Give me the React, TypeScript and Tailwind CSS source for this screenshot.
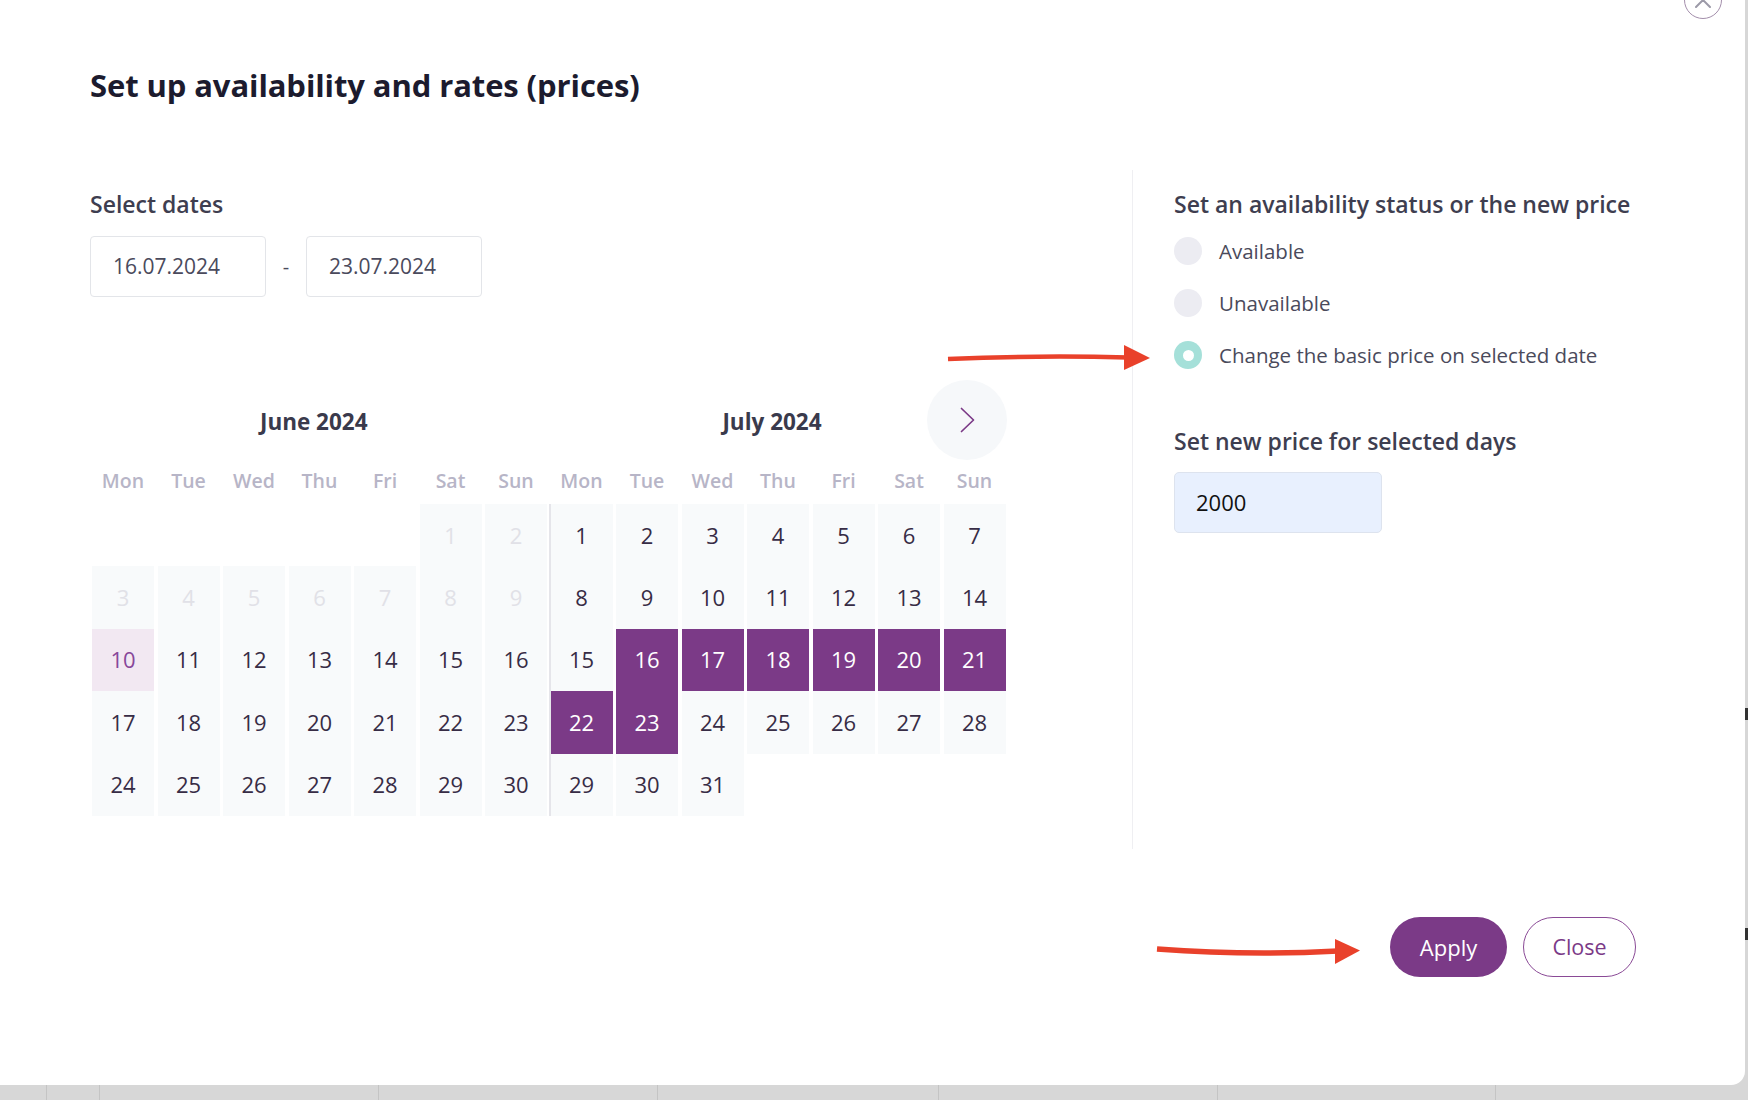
import React from "react"

type Kind = "empty" | "muted" | "normal" | "today" | "selected"
type Day = { n: number | null; kind: Kind }

const WEEKDAYS = ["Mon", "Tue", "Wed", "Thu", "Fri", "Sat", "Sun"]

function buildJune(): Day[] {
  const days: Day[] = []
  for (let i = 0; i < 5; i++) days.push({ n: null, kind: "empty" })
  for (let d = 1; d <= 30; d++) {
    let kind: Kind = "normal"
    if (d <= 9) kind = "muted"
    if (d === 10) kind = "today"
    days.push({ n: d, kind })
  }
  return days
}

function buildJuly(): Day[] {
  const days: Day[] = []
  for (let d = 1; d <= 31; d++) {
    days.push({ n: d, kind: d >= 16 && d <= 23 ? "selected" : "normal" })
  }
  for (let i = 0; i < 4; i++) days.push({ n: null, kind: "empty" })
  return days
}

const cellStyles: Record<Kind, string> = {
  empty: "bg-white",
  muted: "bg-[#f8fafb] text-[#e1e1e7]",
  normal: "bg-[#f8fafb] text-[#372c45]",
  today: "bg-[#f2e8f2] text-[#87479a]",
  selected: "bg-[#7b3a87] text-white",
}

function MonthGrid({ days, divider = false }: { days: Day[]; divider?: boolean }) {
  return (
    <div className="w-[455px]">
      <div className="grid h-[44px] grid-cols-7 items-center gap-x-[3.5px] pb-[2px]">
        {WEEKDAYS.map((w) => (
          <div key={w} className="text-center text-[19.5px] font-semibold text-[#b7b5c7]">
            {w}
          </div>
        ))}
      </div>
      <div
        className={
          "grid grid-cols-7 gap-x-[3.5px] " + (divider ? "shadow-[-2px_0_0_0_#e5e5ea]" : "")
        }
      >
        {days.map((d, i) => (
          <div
            key={i}
            className={
              "flex h-[62.4px] items-center justify-center text-[22px] " + cellStyles[d.kind]
            }
          >
            {d.n}
          </div>
        ))}
      </div>
    </div>
  )
}

function Radio({ label, checked = false }: { label: string; checked?: boolean }) {
  return (
    <div className="flex h-[52px] items-center gap-[17px]">
      <span
        className={
          "flex h-[28px] w-[28px] items-center justify-center rounded-full " +
          (checked ? "bg-[#a5e0d9]" : "bg-[#ececf2]")
        }
      >
        {checked && <span className="h-[11px] w-[11px] rounded-full bg-white" />}
      </span>
      <span className="text-[20.5px] text-[#4a4a5b]">{label}</span>
    </div>
  )
}

function DateBox({ value }: { value: string }) {
  return (
    <div className="flex h-[61px] w-[176px] items-center rounded-[4px] border border-[#e3e5e9] bg-white pl-[22px] text-[21px] text-[#4a4a5c]">
      {value}
    </div>
  )
}

export default function App() {
  return (
    <div
      className="relative h-[1100px] w-[1748px] overflow-hidden bg-[#d7d7d7]"
      style={{ fontFamily: "'Open Sans', 'Noto Sans', sans-serif" }}
    >
      <div className="relative flex h-[1085px] w-[1745px] flex-col rounded-br-[14px] bg-white pl-[90px] pt-[65px]">
        <button className="absolute left-[1684px] top-[-19px] flex h-[38px] w-[38px] items-center justify-center rounded-full border-[1.5px] border-[#a38eab] bg-white">
          <svg width="16" height="16" viewBox="0 0 16 16">
            <path d="M1 1 L15 15 M15 1 L1 15" fill="none" stroke="#9c9aa8" strokeWidth="2" strokeLinecap="round" />
          </svg>
        </button>

        <h1 className="text-[31px] font-bold leading-[40px] tracking-[-0.1px] text-[#1c1b2e]">
          Set up availability and rates (prices)
        </h1>

        <div className="mt-[65px] flex">
          <div className="w-[1042px]">
            <div className="mt-[20px] text-[23px] font-semibold leading-[28px] text-[#3e3e50]">
              Select dates
            </div>
            <div className="mt-[18px] flex items-center">
              <DateBox value="16.07.2024" />
              <span className="w-[40px] text-center text-[20px] text-[#4a4a5c]">-</span>
              <DateBox value="23.07.2024" />
            </div>

            <div className="ml-[2px] mt-[83px] w-[913.5px]">
              <div className="relative flex h-[80px] items-center pt-[3px]">
                <div className="w-[458.5px] pr-[15px] text-center text-[22.5px] font-bold text-[#3a3a4c]">
                  June 2024
                </div>
                <div className="w-[455px] pr-[12px] text-center text-[22.5px] font-bold text-[#3a3a4c]">
                  July 2024
                </div>
                <button className="absolute left-[835px] top-0 flex h-[80px] w-[80px] items-center justify-center rounded-full bg-[#f6f8fa]">
                  <svg width="15" height="26" viewBox="0 0 15 26">
                    <path d="M1.5 1.5 L13.5 13 L1.5 24.5" fill="none" stroke="#7b3a87" strokeWidth="1.7" strokeLinecap="round" strokeLinejoin="round" />
                  </svg>
                </button>
              </div>
              <div className="flex gap-[3.5px]">
                <MonthGrid days={buildJune()} />
                <MonthGrid days={buildJuly()} divider />
              </div>
            </div>
          </div>

          <div className="h-[679px] border-l border-[#efeff2] pl-[41px]">
            <div className="mt-[20px] text-[23px] font-semibold leading-[28px] text-[#3e3e50]">
              Set an availability status or the new price
            </div>
            <div className="mt-[7px]">
              <Radio label="Available" />
              <Radio label="Unavailable" />
              <Radio label="Change the basic price on selected date" checked />
            </div>
            <div className="mt-[46px] text-[23px] font-semibold leading-[28px] text-[#3e3e50]">
              Set new price for selected days
            </div>
            <div className="mt-[17px] flex h-[61px] w-[208px] items-center rounded-[5px] border border-[#dde3ee] bg-[#e8f0fe] pl-[21px] text-[22px] text-[#111111]">
              2000
            </div>
          </div>
        </div>

        <div className="mt-[68px] flex justify-end gap-[16px] pr-[109px]">
          <button className="h-[60px] w-[117px] rounded-full bg-[#7b3a87] text-[22px] text-white">
            Apply
          </button>
          <button className="h-[60px] w-[113px] rounded-full border border-[#8a4a96] bg-white text-[21.5px] text-[#7b3a87]">
            Close
          </button>
        </div>
      </div>

      <div className="flex h-[15px]">
        {[47, 53, 279, 279, 281, 279, 278].map((w, i) => (
          <div key={i} className="h-full border-r border-[#c4c4c4]" style={{ width: w }} />
        ))}
      </div>

      <div className="absolute left-[1745px] top-[708px] h-[12px] w-[3px] bg-[#333]" />
      <div className="absolute left-[1745px] top-[928px] h-[12px] w-[3px] bg-[#333]" />

      <svg className="pointer-events-none absolute inset-0" width="1748" height="1100">
        <path d="M948 359 Q1040 355 1128 357.5" fill="none" stroke="#e9412b" strokeWidth="4.5" />
        <polygon points="1124,345 1150,358 1124,370" fill="#e9412b" />
        <path d="M1157 949 Q1250 956 1338 951" fill="none" stroke="#e9412b" strokeWidth="5.5" />
        <polygon points="1335,939 1360,950.5 1335,964" fill="#e9412b" />
      </svg>
    </div>
  )
}
